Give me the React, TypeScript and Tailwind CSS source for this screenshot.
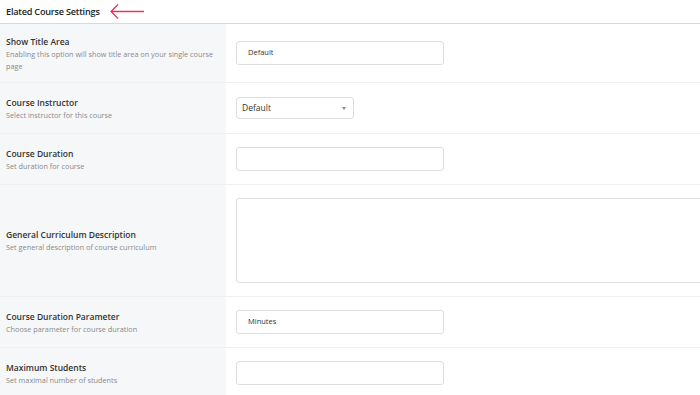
const rows = [
  {
    title: "Show Title Area",
    desc: "Enabling this option will show title area on your single course page",
    h: "h-[59px]",
    field: "input",
    value: "Default",
  },
  { title: "Course Instructor", desc: "Select instructor for this course", h: "h-[51px]", field: "select", value: "Default" },
  { title: "Course Duration", desc: "Set duration for course", h: "h-[51px]", field: "input", value: "" },
  {
    title: "General Curriculum Description",
    desc: "Set general description of course curriculum",
    h: "h-[112px]",
    field: "textarea",
    value: "",
  },
  {
    title: "Course Duration Parameter",
    desc: "Choose parameter for course duration",
    h: "h-[51px]",
    field: "input",
    value: "Minutes",
  },
  { title: "Maximum Students", desc: "Set maximal number of students", h: "h-[51px]", field: "input", value: "" },
];

function Field({ field, value }: { field: string; value: string }) {
  if (field === "select") {
    return (
      <div className="w-[118px] h-[22px] border border-[#dedede] rounded-[3px] bg-white flex items-center justify-between pl-[5px] pr-[7px]">
        <span className="text-[8.5px] text-[#333]">{value}</span>
        <svg width="4" height="3" viewBox="0 0 4 3">
          <path d="M0 0h4L2 3z" fill="#888" />
        </svg>
      </div>
    );
  }
  if (field === "textarea") {
    return <div className="w-[480px] h-[85px] border border-[#dedede] rounded-[3px] bg-white" />;
  }
  return (
    <div className="w-[208px] h-[24px] border border-[#dedede] rounded-[3px] bg-white flex items-center pl-[11px]">
      <span className="text-[7.5px] text-[#333]">{value}</span>
    </div>
  );
}

export default function App() {
  return (
    <div className="w-[700px] h-[395px] overflow-hidden bg-white font-['Open_Sans',sans-serif]">
      {/* header */}
      <div className="h-[24px] border-b border-[#d9d9d9] flex items-center pl-[6px] gap-[9px]">
        <span className="text-[9.1px] font-semibold text-[#222] tracking-[-0.2px]">Elated Course Settings</span>
        <svg width="36" height="17" viewBox="0 0 36 17" className="-mt-[1px]">
          <path d="M35 8.5H2M9 1.5L2 8.5l7 7" fill="none" stroke="#e8365d" strokeWidth="1.3" />
        </svg>
      </div>

      {rows.map((r) => (
        <div key={r.title} className={`flex ${r.h} border-b border-[#eff0f2]`}>
          <div className="w-[226px] shrink-0 bg-[#f6f7f9] flex flex-col justify-center pl-[6px] pr-[8px]">
            <div className="text-[8.5px] font-semibold text-[#333] leading-[13px]">{r.title}</div>
            <div className="text-[7.3px] text-[#8a8a8a] leading-[12px]">{r.desc}</div>
          </div>
          <div className="flex-1 flex items-center pl-[10px]">
            <Field field={r.field} value={r.value} />
          </div>
        </div>
      ))}
    </div>
  );
}
